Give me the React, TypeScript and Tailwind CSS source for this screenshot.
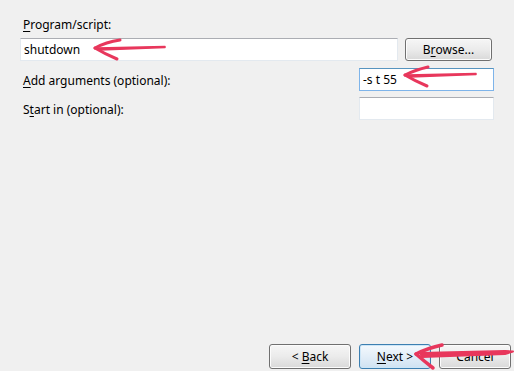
import React from "react";

const font = { fontFamily: '"Noto Sans", "Open Sans", sans-serif' };

const U: React.FC<{ children: React.ReactNode }> = ({ children }) => (
    <span className="underline underline-offset-2">{children}</span>
);

const WinButton: React.FC<{ className?: string; focused?: boolean; children: React.ReactNode }> = ({ className = "", focused, children }) => (
    <button
        className={`flex items-center justify-center whitespace-pre rounded-[3px] border text-[12px] text-black ${
            focused
                ? "border-[#3c7fb1] bg-gradient-to-b from-[#f4f9fd] via-[#e3eef8] to-[#cfe2f2] shadow-[inset_0_0_0_1px_#cde6f7]"
                : "border-[#707070] bg-gradient-to-b from-[#f6f6f6] via-[#ebebeb] to-[#d9d9d9] shadow-[inset_0_0_0_1px_#fcfcfc]"
        } ${className}`}
    >
        {children}
    </button>
);

const Field: React.FC<{ className?: string; hot?: boolean; value?: string }> = ({ className = "", hot, value }) => (
    <div
        className={`flex items-center border bg-white px-[3px] text-[12px] text-black ${
            hot ? "border-[#7eb4ea] border-t-[#5794bf]" : "border-[#e3e9ef] border-t-[#abadb3]"
        } ${className}`}
    >
        {value}
    </div>
);

const Arrows: React.FC = () => (
    <svg className="pointer-events-none absolute inset-0" width="514" height="371" viewBox="0 0 514 371">
        <g fill="#e8375c" stroke="#e8375c" strokeLinecap="round" strokeLinejoin="round">
            {/* arrow 1 */}
            <path d="M97 48 L165 46.5 L165 47.5 L100 50 Z" strokeWidth="1.5" />
            <path d="M95 48 Q106 42 120 40" fill="none" strokeWidth="3" />
            <path d="M95 48 Q105 54 117 59" fill="none" strokeWidth="3" />
            {/* arrow 2 */}
            <path d="M407 75 L476 73.5 L476 74.5 L410 77 Z" strokeWidth="1.5" />
            <path d="M405 75 Q415 70 428 67" fill="none" strokeWidth="3" />
            <path d="M405 75 Q415 81 427 86" fill="none" strokeWidth="3" />
            {/* arrow 3 */}
            <path d="M420 353 L505 351 L513 351.5 L505 354 L422 357 Z" strokeWidth="2" />
            <path d="M416 354 Q428 348 442 345" fill="none" strokeWidth="3.5" />
            <path d="M416 354 Q424 361 433 368" fill="none" strokeWidth="3.5" />
        </g>
    </svg>
);

const App: React.FC = () => {
    return (
        <div className="relative flex h-[371px] w-[514px] flex-col overflow-hidden bg-[#f0f0f0] text-[12px] text-black" style={font}>
            <div className="flex flex-col px-[20px] pt-[16px]">
                <div className="h-[18px] pl-[3px] leading-[18px]">
                    <U>P</U>rogram/script:
                </div>
                <div className="mt-[4px] flex items-center">
                    <Field className="h-[23px] w-[378px]" value="shutdown" />
                    <WinButton className="ml-[7px] h-[23px] w-[87px]">
                        B<U>r</U>owse...
                    </WinButton>
                </div>
                <div className="mt-[7px] flex items-center justify-between">
                    <div className="pl-[3px] pt-[2px]">
                        <U>A</U>dd arguments (optional):
                    </div>
                    <Field className="h-[23px] w-[135px]" hot value="-s t 55" />
                </div>
                <div className="mt-[6px] flex items-center justify-between">
                    <div className="pl-[3px] pt-[2px]">
                        S<U>t</U>art in (optional):
                    </div>
                    <Field className="h-[23px] w-[135px]" />
                </div>
            </div>
            <div className="mt-auto flex justify-end gap-[8px] pb-[2px] pr-[3px]">
                <WinButton className="h-[25px] w-[82px]">
                    {"< "}<U>B</U>ack
                </WinButton>
                <WinButton className="h-[25px] w-[72px]" focused>
                    <U>N</U>ext{" >"}
                </WinButton>
                <WinButton className="h-[25px] w-[72px]">Cancel</WinButton>
            </div>
            <Arrows />
        </div>
    );
};

export default App;
